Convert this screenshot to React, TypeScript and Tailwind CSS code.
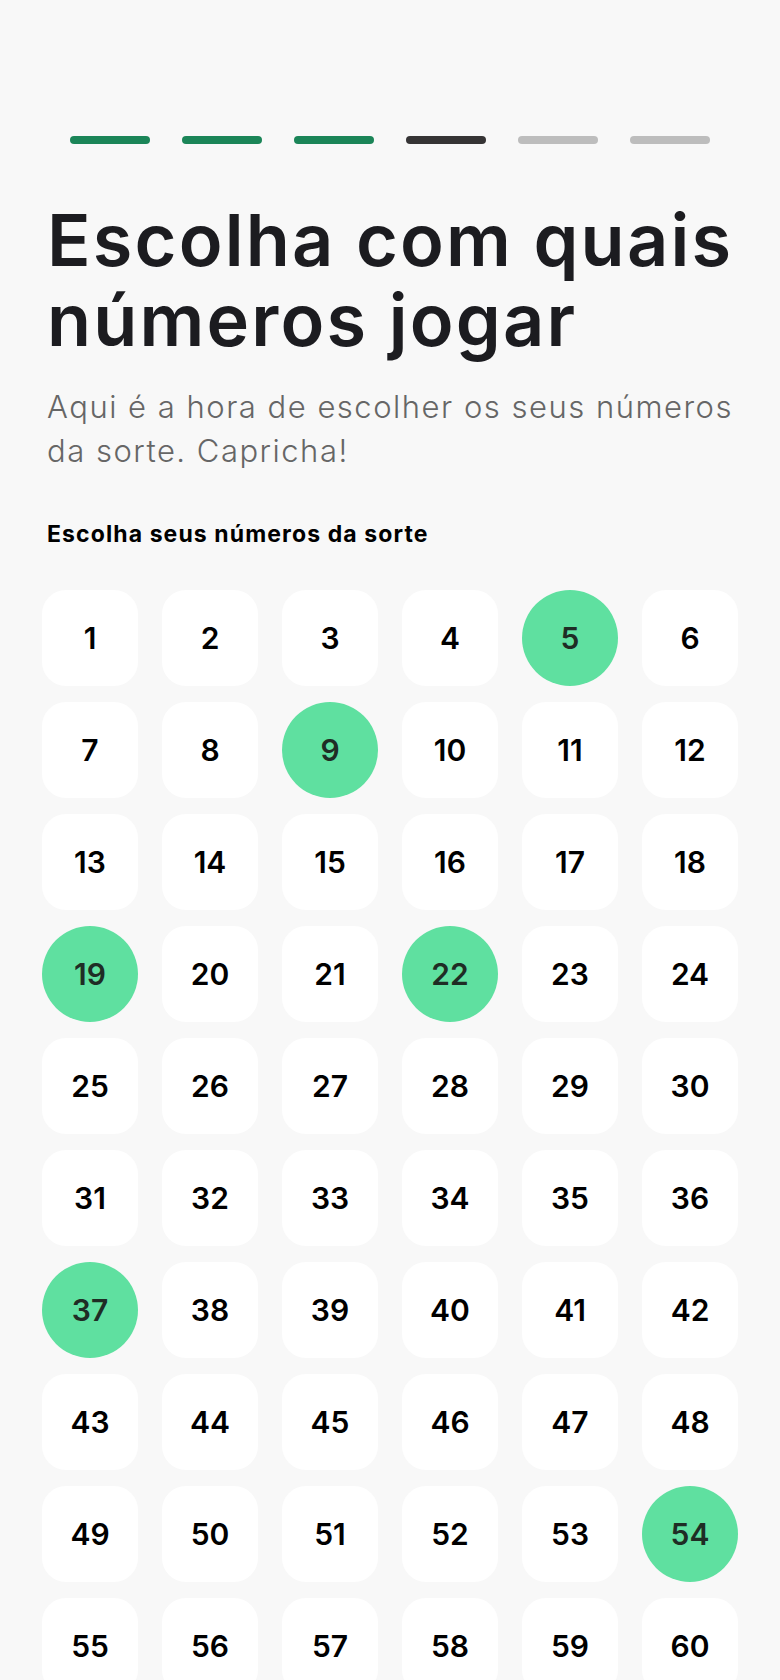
const steps = ["done", "done", "done", "current", "todo", "todo"];
const selected = [5, 9, 19, 22, 37, 54];

const numbers = Array.from({ length: 60 }, (_, i) => i + 1);

export default function App() {
  return (
    <div className="min-h-[1680px] bg-[#f8f8f8] px-[42px] pt-[136px] font-['Inter',sans-serif]">
      <div className="flex gap-[32px] px-[28px]">
        {steps.map((s, i) => (
          <div
            key={i}
            className={
              "h-[8px] w-[80px] rounded-full " +
              (s === "done" ? "bg-[#1b8558]" : s === "current" ? "bg-[#363435]" : "bg-[#bdbdbd]")
            }
          />
        ))}
      </div>

      <div className="px-[5px]">
        <h1 className="mr-[-30px] mt-[56px] text-[72px] font-semibold leading-[80px] tracking-[2.2px] text-[#1c1c20]">
          Escolha com quais
          <br />
          números jogar
        </h1>
        <p className="mt-[25px] text-[31px] font-light leading-[44px] tracking-[1.5px] text-[#666666]">
          Aqui é a hora de escolher os seus números da sorte. Capricha!
        </p>
        <h2 className="mt-[47px] text-[23px] font-bold leading-[28px] tracking-[1.1px] text-black">
          Escolha seus números da sorte
        </h2>
      </div>

      <div className="mt-[42px] grid grid-cols-6 gap-x-[24px] gap-y-[16px]">
        {numbers.map((n) => {
          const on = selected.includes(n);
          return (
            <div
              key={n}
              className={
                "flex h-[96px] w-[96px] items-center justify-center text-[30px] font-semibold " +
                (on ? "rounded-full bg-[#5fe0a0] text-[#1f2d25]" : "rounded-[24px] bg-white text-black")
              }
            >
              {n}
            </div>
          );
        })}
      </div>
    </div>
  );
}
